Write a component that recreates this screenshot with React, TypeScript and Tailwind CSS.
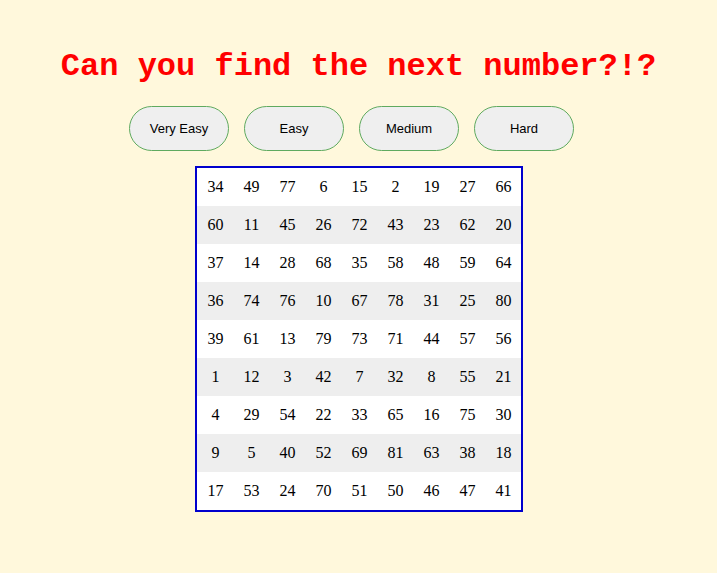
const grid: number[][] = [
  [34, 49, 77, 6, 15, 2, 19, 27, 66],
  [60, 11, 45, 26, 72, 43, 23, 62, 20],
  [37, 14, 28, 68, 35, 58, 48, 59, 64],
  [36, 74, 76, 10, 67, 78, 31, 25, 80],
  [39, 61, 13, 79, 73, 71, 44, 57, 56],
  [1, 12, 3, 42, 7, 32, 8, 55, 21],
  [4, 29, 54, 22, 33, 65, 16, 75, 30],
  [9, 5, 40, 52, 69, 81, 63, 38, 18],
  [17, 53, 24, 70, 51, 50, 46, 47, 41],
];

const levels = ["Very Easy", "Easy", "Medium", "Hard"];

export default function App() {
  return (
    <div className="flex min-h-[573px] w-full flex-col items-center bg-[#fff8dc]">
      <h1 className="mt-[47px] h-[40px] font-['Courier_New','Liberation_Mono',monospace] text-[32px] font-bold leading-[40px] text-[#ff0000]">
        Can you find the next number?!?
      </h1>
      <div className="mt-[19px] flex gap-[15px] pr-[14px]">
        {levels.map((level) => (
          <button
            key={level}
            className="h-[45px] w-[100px] rounded-full border border-[#5faa5f] bg-[#efefef] font-['Liberation_Sans',Arial,sans-serif] text-[13px] text-black"
          >
            {level}
          </button>
        ))}
      </div>
      <div className="mt-[15px] w-[328px] border-2 border-[#0000cd] bg-white">
        {grid.map((row, i) => (
          <div
            key={i}
            className={`grid h-[38px] grid-cols-[repeat(9,36px)] items-center pl-[1px] ${i % 2 === 1 ? "bg-[#eeeeee]" : "bg-white"}`}
          >
            {row.map((n, j) => (
              <span
                key={j}
                className="text-center font-['Liberation_Serif','Times_New_Roman',serif] text-[16px] text-black"
              >
                {n}
              </span>
            ))}
          </div>
        ))}
      </div>
    </div>
  );
}
